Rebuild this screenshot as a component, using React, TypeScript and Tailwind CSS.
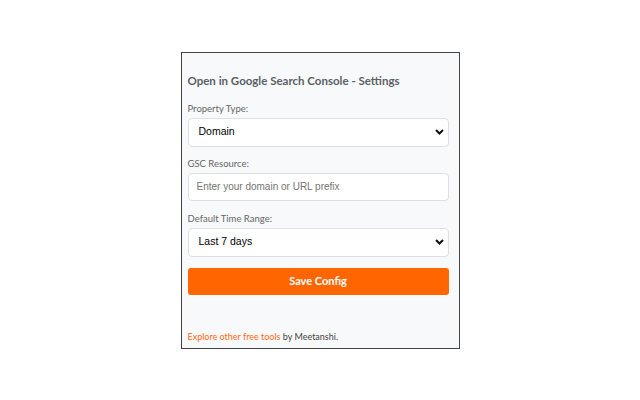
import React from 'react';

const labelClass = "block text-[9.5px] leading-[14px] text-[#666]";
const fieldClass =
  "block w-full bg-white border border-[#dcdfe3] rounded-[4px] text-black outline-none font-['Liberation_Sans',sans-serif]";

function Chevron() {
  return (
    <svg
      className="pointer-events-none absolute right-[5px] top-1/2 -translate-y-1/2"
      width="9"
      height="6"
      viewBox="0 0 9 6"
      fill="none"
    >
      <path d="M1 1l3.5 3.5L8 1" stroke="#111" strokeWidth="2" />
    </svg>
  );
}

export default function App() {
  return (
    <div className="w-[640px] h-[400px] bg-white flex items-center justify-center font-['Lato',sans-serif]">
      <div className="w-[279px] h-[297px] border border-[#444] bg-[#f8f9fa] pl-[6px] pr-[10px] pt-[20px] flex flex-col">
        <h1 className="text-[11.5px] leading-[16px] font-bold text-[#5a5f66]">
          Open in Google Search Console - Settings
        </h1>

        <label className={`${labelClass} mt-[13px]`}>Property Type:</label>
        <div className="relative mt-[2px]">
          <select className={`${fieldClass} appearance-none h-[29px] pl-[10px] text-[10.5px]`} defaultValue="domain">
            <option value="domain">Domain</option>
            <option value="url">URL prefix</option>
          </select>
          <Chevron />
        </div>

        <label className={`${labelClass} mt-[10px]`}>GSC Resource:</label>
        <input
          type="text"
          placeholder="Enter your domain or URL prefix"
          className={`${fieldClass} mt-[2px] h-[28px] px-[8px] text-[10px] placeholder:text-[#757575]`}
        />

        <label className={`${labelClass} mt-[11px]`}>Default Time Range:</label>
        <div className="relative mt-[2px]">
          <select className={`${fieldClass} appearance-none h-[29px] pl-[10px] text-[10.5px]`} defaultValue="7">
            <option value="7">Last 7 days</option>
            <option value="28">Last 28 days</option>
            <option value="90">Last 3 months</option>
          </select>
          <Chevron />
        </div>

        <button className="mt-[11px] h-[27px] w-full rounded-[3px] bg-[#ff6600] text-white text-[11px] font-bold">
          Save Config
        </button>

        <p className="mt-auto mb-[4px] text-[9px] leading-[14px] text-[#444]">
          <a className="text-[#ff6a13]" href="#">Explore other free tools</a> by Meetanshi.
        </p>
      </div>
    </div>
  );
}
